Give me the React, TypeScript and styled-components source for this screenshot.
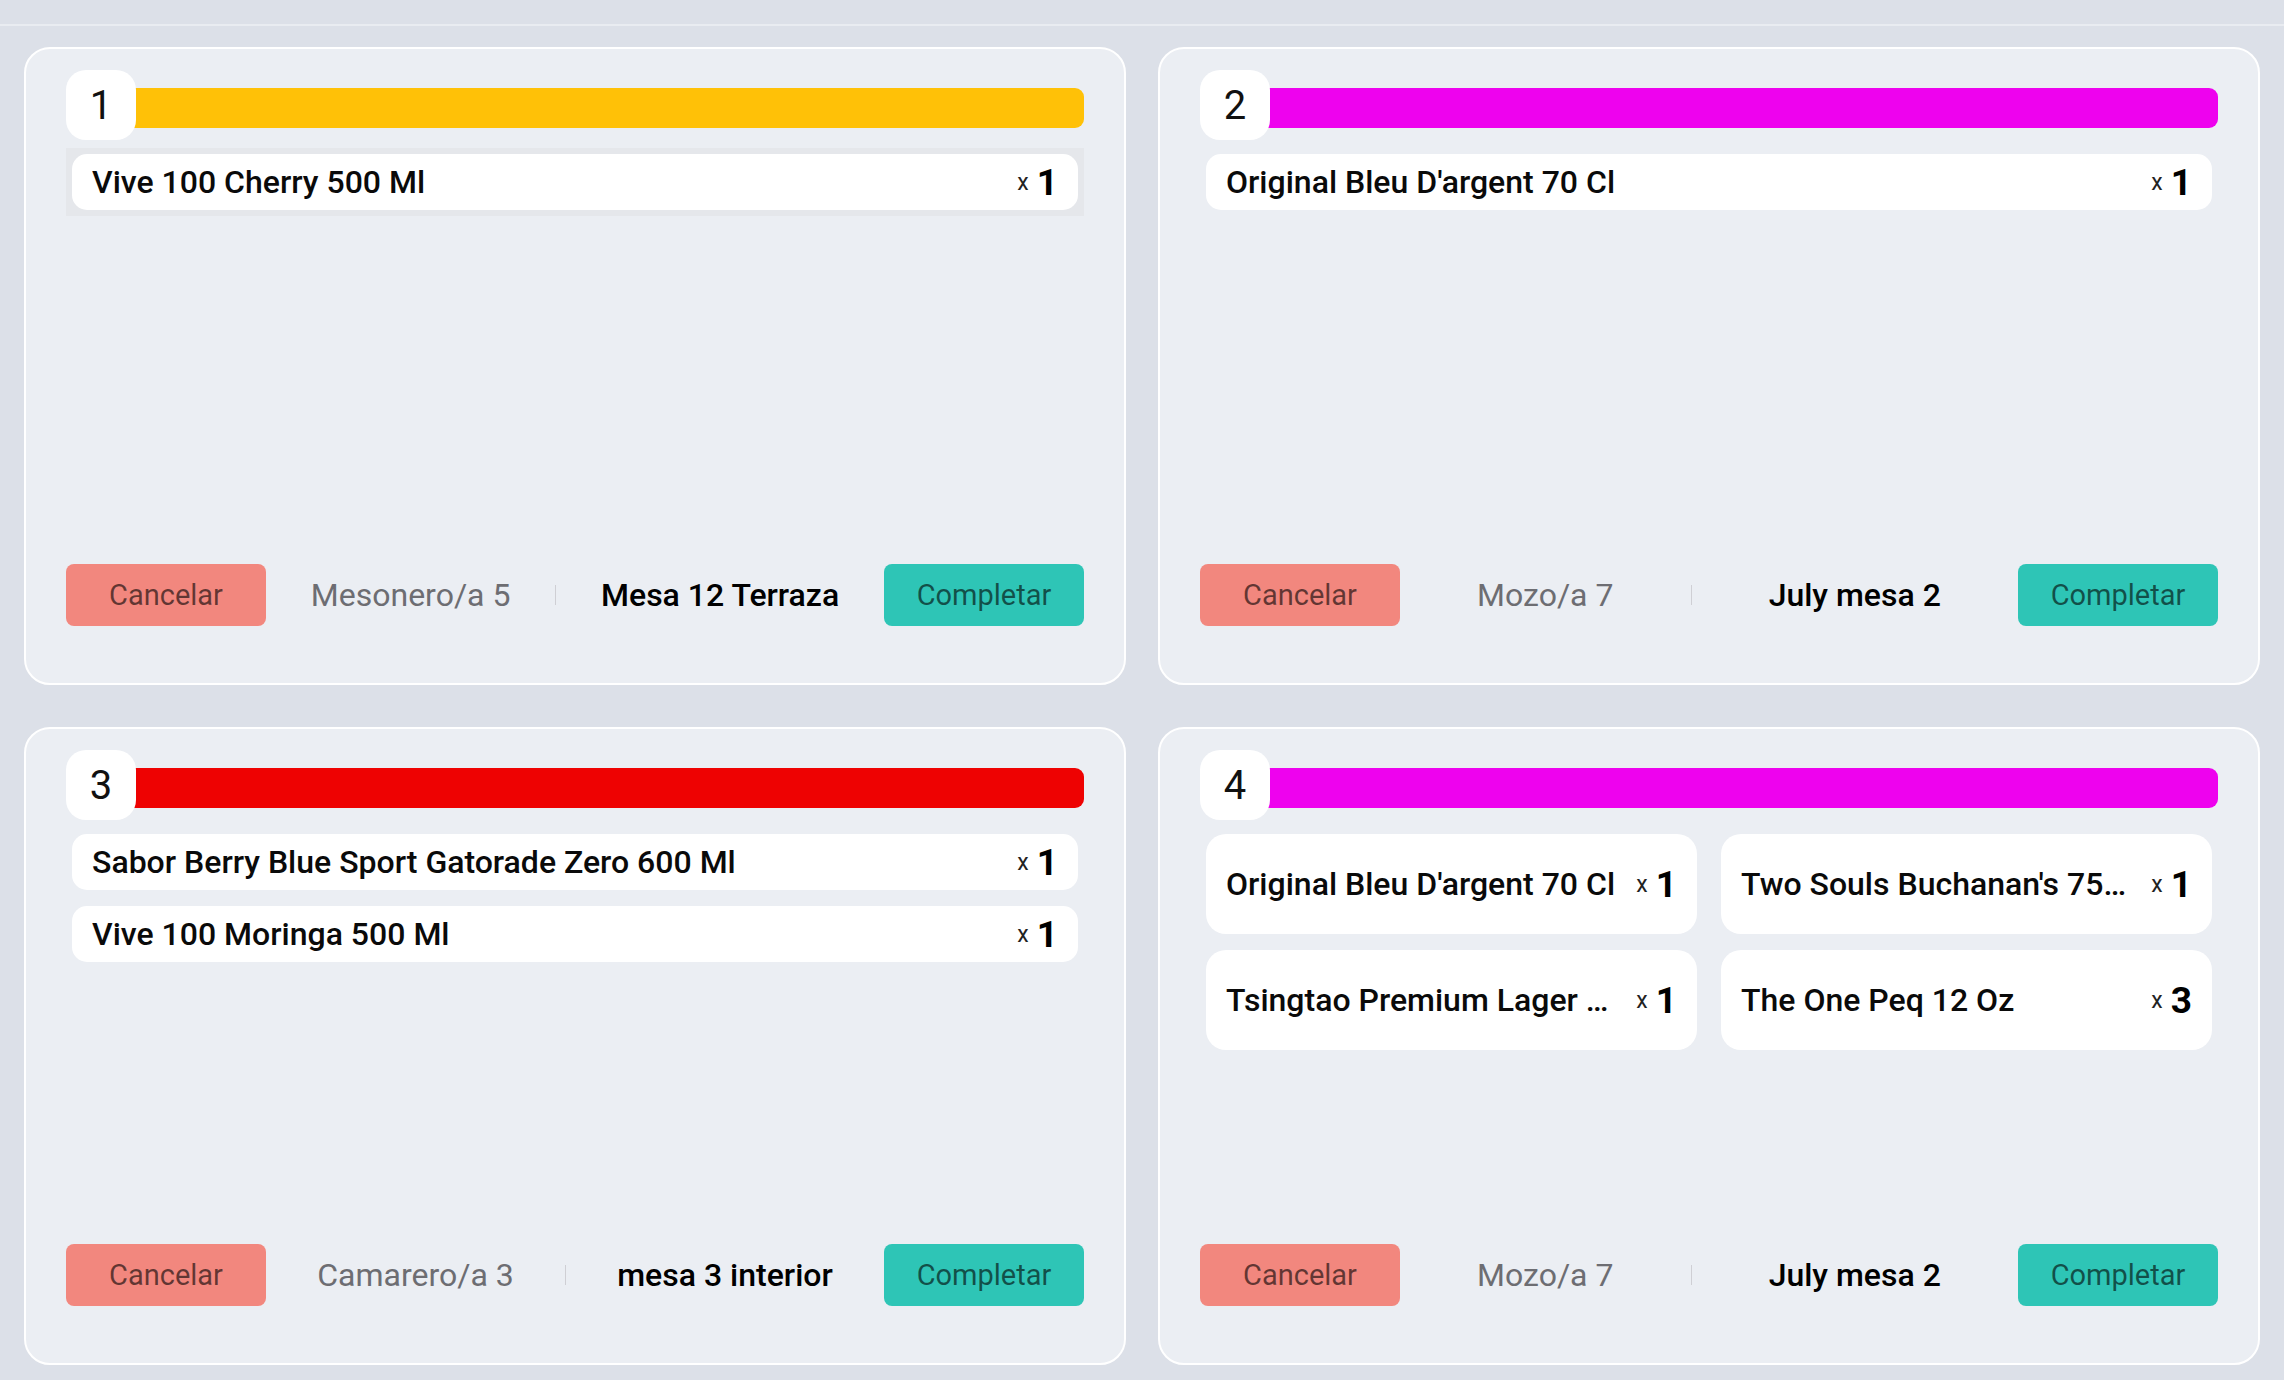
import React from 'react';
import styled, { createGlobalStyle } from 'styled-components';

type Item = { name: string; qty: number };
type Order = {
  id: number;
  color: string;
  waiter: string;
  table: string;
  grid?: boolean;
  hover?: boolean;
  items: Item[];
};

const orders: Order[] = [
  {
    id: 1,
    color: '#ffc107',
    waiter: 'Mesonero/a 5',
    table: 'Mesa 12 Terraza',
    hover: true,
    items: [{ name: 'Vive 100 Cherry 500 Ml', qty: 1 }],
  },
  {
    id: 2,
    color: '#ee02ee',
    waiter: 'Mozo/a 7',
    table: 'July mesa 2',
    items: [{ name: "Original Bleu D'argent 70 Cl", qty: 1 }],
  },
  {
    id: 3,
    color: '#ee0202',
    waiter: 'Camarero/a 3',
    table: 'mesa 3 interior',
    items: [
      { name: 'Sabor Berry Blue Sport Gatorade Zero 600 Ml', qty: 1 },
      { name: 'Vive 100 Moringa 500 Ml', qty: 1 },
    ],
  },
  {
    id: 4,
    color: '#ee02ee',
    waiter: 'Mozo/a 7',
    table: 'July mesa 2',
    grid: true,
    items: [
      { name: "Original Bleu D'argent 70 Cl", qty: 1 },
      { name: "Two Souls Buchanan's 75…", qty: 1 },
      { name: 'Tsingtao Premium Lager …', qty: 1 },
      { name: 'The One Peq 12 Oz', qty: 3 },
    ],
  },
];

const OrderCard: React.FC<{ order: Order }> = ({ order }) => (
  <Card>
    <Head>
      <Badge>{order.id}</Badge>
      <Bar $color={order.color} />
    </Head>
    <List $grid={!!order.grid} $hover={!!order.hover}>
      {order.items.map((item) => (
        <Row key={item.name} $tall={!!order.grid}>
          <Name>{item.name}</Name>
          <Qty>
            <small>x</small>
            <b>{item.qty}</b>
          </Qty>
        </Row>
      ))}
    </List>
    <Footer>
      <Button $variant="cancel">Cancelar</Button>
      <Waiter>{order.waiter}</Waiter>
      <Divider />
      <Table>{order.table}</Table>
      <Button $variant="done">Completar</Button>
    </Footer>
  </Card>
);

const App: React.FC = () => (
  <>
    <GlobalStyle />
    <TopBar />
    <Board>
      {orders.map((order) => (
        <OrderCard key={order.id} order={order} />
      ))}
    </Board>
  </>
);

const GlobalStyle = createGlobalStyle`
  * { box-sizing: border-box; }
  html, body {
    margin: 0;
    background: #dce0e8;
    font-family: Roboto, 'Liberation Sans', sans-serif;
    color: #000;
  }
`;

const TopBar = styled.div`
  height: 26px;
  border-bottom: 2px solid #e9ecf1;
`;

const Board = styled.main`
  display: grid;
  grid-template-columns: 1102px 1102px;
  column-gap: 32px;
  row-gap: 42px;
  padding: 21px 24px 16px;
`;

const Card = styled.section`
  display: flex;
  flex-direction: column;
  height: 638px;
  padding: 21px 40px 57px;
  background: #ebeef3;
  border: 2px solid #fff;
  border-radius: 26px;
`;

const Head = styled.div`
  display: flex;
  align-items: flex-start;
`;

const Badge = styled.div`
  width: 70px;
  height: 70px;
  display: flex;
  align-items: center;
  justify-content: center;
  background: #fff;
  border-radius: 20px;
  font-size: 40px;
  font-weight: 400;
  color: #111;
  position: relative;
  z-index: 1;
`;

const Bar = styled.div<{ $color: string }>`
  flex: 1;
  height: 40px;
  margin-top: 18px;
  margin-left: -10px;
  background: ${(p) => p.$color};
  border-radius: 0 9px 9px 0;
`;

const List = styled.div<{ $grid: boolean; $hover: boolean }>`
  margin-top: 8px;
  padding: 6px;
  display: grid;
  grid-template-columns: ${(p) => (p.$grid ? 'minmax(0, 1fr) minmax(0, 1fr)' : 'minmax(0, 1fr)')};
  column-gap: 24px;
  row-gap: 16px;
  background: ${(p) => (p.$hover ? '#e5e7eb' : 'transparent')};
`;

const Row = styled.div<{ $tall: boolean }>`
  display: flex;
  align-items: center;
  min-width: 0;
  height: ${(p) => (p.$tall ? '100px' : '56px')};
  padding: 0 20px;
  background: #fff;
  border-radius: ${(p) => (p.$tall ? '20px' : '15px')};
`;

const Name = styled.span`
  flex: 1;
  min-width: 0;
  white-space: nowrap;
  overflow: hidden;
  text-overflow: ellipsis;
  font-size: 32px;
  font-weight: 500;
  color: #0a0a0a;
`;

const Qty = styled.span`
  display: flex;
  align-items: center;
  margin-left: 16px;
  gap: 8px;
  small {
    font-size: 23px;
    color: #222;
  }
  b {
    font-size: 37px;
    font-weight: 700;
  }
`;

const Footer = styled.footer`
  margin-top: auto;
  display: flex;
  align-items: center;
  justify-content: space-between;
`;

const Button = styled.button<{ $variant: 'cancel' | 'done' }>`
  width: 200px;
  height: 62px;
  border: none;
  border-radius: 8px;
  font-family: inherit;
  font-size: 29px;
  color: rgba(0, 0, 0, 0.6);
  background: ${(p) => (p.$variant === 'cancel' ? '#f2877e' : '#2ec5b6')};
  cursor: pointer;
`;

const Waiter = styled.span`
  font-size: 32px;
  color: #6d6d72;
`;

const Divider = styled.span`
  width: 1px;
  height: 20px;
  background: #cfcfd4;
`;

const Table = styled.span`
  font-size: 32px;
  font-weight: 500;
`;

export default App;
